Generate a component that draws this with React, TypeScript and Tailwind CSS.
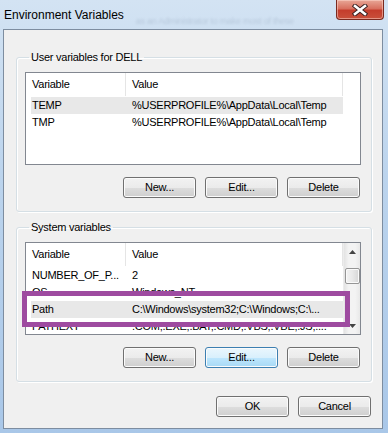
import React from 'react'

type Row = { name: string; value: string; hot?: boolean }

const userRows: Row[] = [
  { name: 'TEMP', value: '%USERPROFILE%\\AppData\\Local\\Temp', hot: true },
  { name: 'TMP', value: '%USERPROFILE%\\AppData\\Local\\Temp' },
]

const systemRows: Row[] = [
  { name: 'NUMBER_OF_P...', value: '2' },
  { name: 'OS', value: 'Windows_NT' },
  { name: 'Path', value: 'C:\\Windows\\system32;C:\\Windows;C:\\...', hot: true },
  { name: 'PATHEXT', value: '.COM;.EXE;.BAT;.CMD;.VBS;.VBE;.JS;....' },
]

const Btn = ({ label, hot }: { label: string; hot?: boolean }) => (
  <button
    className={`w-[73px] h-[21px] rounded-[3px] border text-[11px] text-black leading-none shadow-[inset_0_0_0_1px_#fbfbfb] ${
      hot
        ? 'border-[#3c7fb1] bg-[linear-gradient(to_bottom,#eaf6fd_0%,#d9f0fc_50%,#bee6fd_51%,#a7d9f5_100%)]'
        : 'border-[#707070] bg-[linear-gradient(to_bottom,#f2f2f2_0%,#ebebeb_50%,#dddddd_51%,#cfcfcf_100%)]'
    }`}
  >
    {label}
  </button>
)

const Header = ({ wide }: { wide?: boolean }) => (
  <div className="h-[23px] flex items-center bg-white shrink-0">
    <div className="w-[100px] h-full flex items-center pl-[6px] border-r border-[#e5e5e5]">Variable</div>
    <div className="w-[217px] h-full flex items-center pl-[6px] border-r border-[#e5e5e5]">Value</div>
    {wide && <div className="flex-1" />}
  </div>
)

const Rows = ({ rows }: { rows: Row[] }) => (
  <div className="mt-px">
    {rows.map((r, i) => (
      <div
        key={i}
        className={`h-[17px] ml-[5px] w-[312px] flex items-center whitespace-nowrap ${r.hot ? 'bg-[#e8e8e8]' : ''}`}
      >
        <div className="w-[95px] pl-px">{r.name}</div>
        <div className="pl-[6px]">{r.value}</div>
      </div>
    ))}
  </div>
)

const Scrollbar = () => (
  <div className="w-[17px] h-full flex flex-col bg-[linear-gradient(to_right,#e3e3e3,#f3f3f3_30%,#f3f3f3_70%,#e8e8e8)] border-l border-[#ececec]">
    <div className="h-[17px] flex items-center justify-center">
      <svg width="7" height="4" viewBox="0 0 7 4"><path d="M3.5 0L7 4H0z" fill="#444" /></svg>
    </div>
    <div className="mt-[8px] mx-auto w-[15px] h-[16px] rounded-[2px] border border-[#959595] bg-[linear-gradient(to_right,#f3f3f3,#e8e8e8_50%,#d6d6d6)] shadow-[inset_0_0_0_1px_#fafafa]" />
    <div className="flex-1" />
    <div className="h-[17px] flex items-center justify-center">
      <svg width="7" height="4" viewBox="0 0 7 4"><path d="M0 0H7L3.5 4z" fill="#444" /></svg>
    </div>
  </div>
)

const Group = ({ title, children, className }: { title: string; children: React.ReactNode; className?: string }) => (
  <fieldset
    className={`ml-[12px] mr-[10px] border border-[#d5dfe5] rounded-[3px] shadow-[inset_1px_1px_0_#fff,1px_1px_0_#fff] pl-[8px] pr-[10px] pb-[13px] ${className ?? ''}`}
  >
    <legend className="ml-[4px] px-[2px] h-[13px] leading-[13px]">{title}</legend>
    {children}
  </fieldset>
)

export default function App() {
  return (
    <div className="relative w-[388px] h-[433px] overflow-hidden bg-[linear-gradient(to_bottom,#d3e3f3,#bcd4ed_40%,#a9c7e8)] font-['Liberation_Sans',Arial,sans-serif] text-[11px] tracking-[-0.25px] text-black">
      {/* title bar */}
      <div className="h-[29px] flex items-start">
        <div className="pl-[4px] h-[29px] flex items-center text-[12px] tracking-normal text-black">Environment Variables</div>
        <div className="flex-1 mt-[15px] pl-[12px] text-[9px] text-[#7f90a6] opacity-30 blur-[1px] whitespace-nowrap">
          as an Administrator to make most of these
        </div>
        <div className="mr-[4px] w-[48px] h-[20px] rounded-b-[4px] border border-t-0 border-[#7a2a20] bg-[linear-gradient(to_bottom,#e8a797_0%,#d8705f_45%,#c43d2c_55%,#c9503b_100%)] shadow-[inset_0_0_0_1px_rgba(255,220,210,0.5)] flex items-center justify-center">
          <svg width="16" height="12" viewBox="0 0 16 12">
            <path d="M3 2L13 10M13 2L3 10" stroke="#3a2020" strokeWidth="4.5" strokeLinecap="square" />
            <path d="M3 2L13 10M13 2L3 10" stroke="#ffffff" strokeWidth="2.6" strokeLinecap="square" />
          </svg>
        </div>
      </div>

      {/* client area */}
      <div className="ml-[3px] mr-[5px] h-[400px] border border-[#7d8da0] bg-[#f0f0f0] flex flex-col">
        <Group title="User variables for DELL" className="mt-[21px]">
          <div className="mt-[8px] h-[93px] border border-[#828790] bg-white flex flex-col overflow-hidden">
            <Header wide />
            <Rows rows={userRows} />
          </div>
          <div className="mt-[12px] flex justify-end gap-[9px] pr-px">
            <Btn label="New..." />
            <Btn label="Edit..." />
            <Btn label="Delete" />
          </div>
        </Group>

        <Group title="System variables" className="mt-[9px]">
          <div className="mt-[8px] h-[93px] border border-[#828790] bg-white flex overflow-hidden">
            <div className="w-[317px] flex flex-col overflow-hidden">
              <Header />
              <Rows rows={systemRows} />
            </div>
            <Scrollbar />
          </div>
          <div className="mt-[12px] flex justify-end gap-[9px] pr-px">
            <Btn label="New..." />
            <Btn label="Edit..." hot />
            <Btn label="Delete" />
          </div>
        </Group>

        <div className="mt-[14px] mr-[11px] flex justify-end gap-[9px]">
          <Btn label="OK" />
          <Btn label="Cancel" />
        </div>
      </div>

      {/* annotation box */}
      <div className="absolute left-[22px] top-[291px] w-[328px] h-[36px] border-[5px] border-[#9e4ba0]" />
    </div>
  )
}
